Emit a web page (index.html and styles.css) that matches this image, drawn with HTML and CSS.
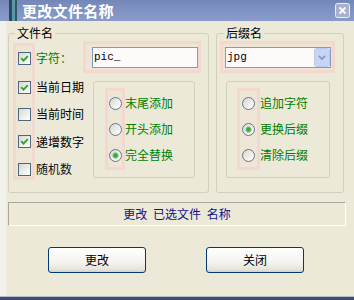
FILE: index.html
```html
<!DOCTYPE html>
<html lang="zh-CN">
<head>
<meta charset="utf-8">
<title>更改文件名称</title>
<link rel="stylesheet" href="styles.css">
</head>
<body>
<div class="window">
  <div class="titlebar">
    <svg class="appicon" width="8" height="21" viewBox="0 0 8 21"><rect x="0" y="0" width="3" height="21" fill="#2a4a58"/><rect x="3" y="0" width="3" height="21" fill="#5a98a6"/><rect x="6" y="0" width="2" height="21" fill="#2f5866"/></svg>
    <span class="title">更改文件名称</span>
    <svg class="close" width="15" height="15" viewBox="0 0 15 15"><rect x="0.5" y="0.5" width="14" height="14" rx="2" fill="#a7b1cd" stroke="#eceff6"/><path d="M4.5 4.5l6 6M10.5 4.5l-6 6" stroke="#ffffff" stroke-width="1.8"/></svg>
  </div>
  <div class="content">
    <div class="groups">
      <div class="group left-group">
        <span class="legend">文件名</span>
        <div class="lgrid">
          <div class="strip lstrip"></div>
          <span class="cb r1"><svg width="11" height="11" viewBox="0 0 11 11"><path d="M2.2 5.2l2.3 2.4L8.8 3.2" stroke="#2aa52a" stroke-width="1.9" fill="none"/></svg></span>
          <span class="lbl green r1">字符：</span>
          <div class="strip input-hl"><div class="input">pic_</div></div>
          <span class="cb r2"><svg width="11" height="11" viewBox="0 0 11 11"><path d="M2.2 5.2l2.3 2.4L8.8 3.2" stroke="#2aa52a" stroke-width="1.9" fill="none"/></svg></span>
          <span class="lbl r2">当前日期</span>
          <span class="cb r3"></span>
          <span class="lbl r3">当前时间</span>
          <span class="cb r4"><svg width="11" height="11" viewBox="0 0 11 11"><path d="M2.2 5.2l2.3 2.4L8.8 3.2" stroke="#2aa52a" stroke-width="1.9" fill="none"/></svg></span>
          <span class="lbl r4">递增数字</span>
          <span class="cb r5"></span>
          <span class="lbl r5 dark">随机数</span>
          <div class="group lradios">
            <div class="strip rstrip"></div>
            <span class="rd r1"></span>
            <span class="rlbl green r1">末尾添加</span>
            <span class="rd r2"></span>
            <span class="rlbl green r2">开头添加</span>
            <span class="rd on r3"></span>
            <span class="rlbl green r3">完全替换</span>
          </div>
        </div>
      </div>
      <div class="group right-group">
        <span class="legend legend-r">后缀名</span>
        <div class="strip combo-hl">
          <div class="combo">
            <span class="combo-text">jpg</span>
            <svg class="combo-btn" width="16" height="19" viewBox="0 0 16 19"><rect x="0.5" y="0.5" width="15" height="18" rx="2" fill="#c7d4f4" stroke="#bac9ec"/><path d="M4.8 7.8l3.2 3.2 3.2-3.2" stroke="#8494c4" stroke-width="1.6" fill="none"/></svg>
          </div>
        </div>
        <div class="group rradios">
          <div class="strip rstrip"></div>
          <span class="rd r1"></span>
          <span class="rlbl green r1">追加字符</span>
          <span class="rd on r2"></span>
          <span class="rlbl green r2">更换后缀</span>
          <span class="rd r3"></span>
          <span class="rlbl green r3">清除后缀</span>
        </div>
      </div>
    </div>
    <div class="status">更改 已选文件 名称</div>
    <div class="buttons">
      <button class="btn">更改</button>
      <button class="btn">关闭</button>
    </div>
  </div>
</div>
</body>
</html>
```
FILE: styles.css
```css
* { box-sizing: border-box; }
html, body { margin: 0; padding: 0; }
body {
  width: 354px;
  height: 300px;
  overflow: hidden;
  font-family: "Noto Sans CJK SC", "Noto Sans", sans-serif;
  font-size: 12px;
  color: #000;
}
.window {
  width: 354px;
  height: 300px;
  display: flex;
  flex-direction: column;
  background: linear-gradient(to right, #f2f1eb 0, #f2f1eb 5px, #ece9d8 7px);
  border-bottom: 3px solid #404d70;
  box-shadow: inset 0 -1px 0 #b3bcd3;
}
.titlebar {
  flex: none;
  height: 21px;
  display: flex;
  align-items: center;
  padding-left: 9px;
  background: linear-gradient(to bottom, #7286b8 0%, #7f92c1 45%, #8a9bc8 100%);
}
.appicon { display: block; }
.title {
  margin-left: 5px;
  color: #fff;
  font-weight: 700;
  font-size: 15px;
  letter-spacing: 0.3px;
  line-height: 21px;
}
.close { display: block; margin-left: auto; margin-right: 4px; }
.content { padding-top: 12px; display: flex; flex-direction: column; }
.groups { display: flex; gap: 7px; padding-left: 8px; height: 160px; }
.group { border: 1px solid #d0d0bf; border-radius: 3px; }
.left-group { width: 201px; height: 160px; }
.right-group { width: 128px; height: 160px; }
.legend {
  display: block;
  width: fit-content;
  height: 12px;
  margin: -7px 0 0 6px;
  padding: 0 2px;
  line-height: 12px;
  background: #ece9d8;
}
.legend-r { margin-left: 7px; }
.strip {
  border: 3px solid #f3d8cf;
  background: rgba(244, 220, 212, 0.2);
}
.lgrid {
  display: grid;
  margin-top: 4px;
  grid-template-columns: 4px 22px 58px 102px 1fr;
  grid-template-rows: 30px 28px 26px 29px 26px;
}
.lstrip { grid-column: 2; grid-row: 1 / -1; margin-bottom: 2px; }
.r1 { grid-row: 1; }
.r2 { grid-row: 2; }
.r3 { grid-row: 3; }
.r4 { grid-row: 4; }
.r5 { grid-row: 5; }
.cb {
  grid-column: 2;
  place-self: center;
  width: 13px;
  height: 13px;
  border: 1px solid #4f6680;
  background: linear-gradient(135deg, #d8d8d0 0%, #f4f4f0 70%, #ffffff 100%);
  display: flex;
}
.cb svg { display: block; }
.lbl {
  grid-column: 3;
  align-self: center;
  padding-left: 1px;
  line-height: 14px;
  white-space: nowrap;
}
.dark { color: #111; }
.green { color: #008000; }
.input-hl {
  grid-column: 3 / -1;
  grid-row: 1;
  justify-self: end;
  align-self: start;
  margin: -2px 7px 0 0;
  width: 118px;
  height: 32px;
  padding: 3px 0 0 6px;
}
.input {
  width: 106px;
  height: 21px;
  border: 1px solid #7f9db9;
  background: #fffafa;
  padding-left: 1px;
  font-family: "Liberation Mono", monospace;
  font-size: 11px;
  line-height: 19px;
}
.lradios {
  grid-column: 4;
  grid-row: 2 / -1;
  align-self: start;
  margin-top: 8px;
  height: 97px;
  display: grid;
  grid-template-columns: 20px auto;
  grid-template-rows: repeat(3, 26px);
  padding: 8px 0 0 11px;
}
.rstrip { grid-column: 1; grid-row: 1 / -1; margin: -2px 0 -2px 0; }
.rd {
  grid-column: 1;
  place-self: center;
  width: 13px;
  height: 13px;
  border-radius: 50%;
  border: 1px solid #66778b;
  background: linear-gradient(135deg, #d6d6ce 0%, #f3f3ef 65%, #ffffff 100%);
}
.rd.on {
  background:
    radial-gradient(circle at center, #3da83d 0, #3da83d 1.8px, #9ad79a 2.8px, rgba(255,255,255,0) 3.6px),
    linear-gradient(135deg, #d6d6ce 0%, #f3f3ef 65%, #ffffff 100%);
}
.rlbl {
  grid-column: 2;
  align-self: center;
  line-height: 14px;
  white-space: nowrap;
}
.combo-hl {
  margin: 2px 0 0 3px;
  width: 115px;
  height: 32px;
  padding: 3px 0 0 2px;
}
.combo {
  width: 106px;
  height: 21px;
  border: 1px solid #7f9db9;
  background: #fffafa;
  display: flex;
}
.combo-text {
  flex: 1;
  padding-left: 1px;
  font-family: "Liberation Mono", monospace;
  font-size: 11px;
  line-height: 19px;
}
.combo-btn { display: block; }
.rradios {
  margin: 8px 0 0 9px;
  width: 104px;
  height: 97px;
  display: grid;
  grid-template-columns: 23px auto;
  grid-template-rows: repeat(3, 26px);
  padding: 8px 0 0 10px;
}
.status {
  margin: 9px 0 0 8px;
  width: 338px;
  height: 24px;
  border-top: 1px solid #aca899;
  border-left: 1px solid #aca899;
  border-right: 1px solid #ffffff;
  border-bottom: 1px solid #ffffff;
  text-align: center;
  line-height: 22px;
  color: #10108a;
  word-spacing: 3px;
}
.buttons {
  display: flex;
  gap: 60px;
  margin-top: 21px;
  padding-left: 48px;
}
.btn {
  width: 98px;
  height: 26px;
  padding: 0;
  border: 1px solid #003c74;
  border-radius: 3px;
  background: linear-gradient(to bottom, #ffffff 0%, #f4f3ee 60%, #e6e3da 90%, #d6d0c5 100%);
  font-family: "Noto Sans CJK SC", "Noto Sans", sans-serif;
  font-size: 12px;
  line-height: 24px;
  color: #000;
}
```
